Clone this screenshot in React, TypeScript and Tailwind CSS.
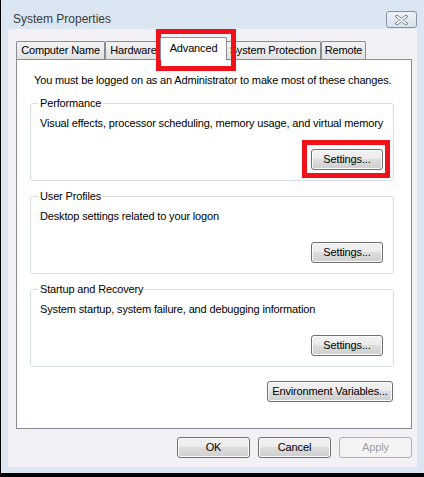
import React from 'react';

const btn =
  'h-[21px] flex items-center justify-center rounded-[3px] border border-[#707070] bg-[linear-gradient(#f2f2f2_0%,#ebebeb_50%,#dddddd_50%,#cfcfcf_100%)] shadow-[inset_0_0_0_1px_#fbfbfb] text-black';

const Tab: React.FC<{ label: string; width: string; active?: boolean }> = ({ label, width, active }) => {
  if (active) {
    return (
      <div
        className={`${width} -mx-[2px] -mb-px h-[23px] relative z-10 flex items-center justify-center pb-[2px] border border-b-0 border-[#898c95] rounded-t-[2px] bg-white`}
      >
        {label}
      </div>
    );
  }
  return (
    <div
      className={`${width} h-[18px] flex items-center justify-center border border-b-0 border-[#898c95] rounded-t-[2px] bg-[linear-gradient(#f3f3f3,#e2e2e2)]`}
    >
      {label}
    </div>
  );
};

const Group: React.FC<{ title: string; text: string }> = ({ title, text }) => (
  <fieldset className="mt-[8px] ml-[13px] mr-[17px] min-w-0 border border-[#d5dfe5] rounded-[3px] px-[9px] pb-[10px]">
    <legend className="ml-[-2px] px-[2px] leading-[14px]">{title}</legend>
    <div className="mt-[5px] leading-[16px] whitespace-nowrap">{text}</div>
    <div className="mt-[18px] flex justify-end pr-px">
      <button className={`${btn} w-[72px]`}>Settings...</button>
    </div>
  </fieldset>
);

export default function App() {
  return (
    <div className="relative w-[424px] h-[477px] bg-black pl-px pb-[4px] flex font-['Liberation_Sans',Arial,sans-serif] text-[11px] tracking-[-0.15px] text-black">
      <div className="flex-1 flex flex-col bg-[#dbe6f3] px-[7px] pb-[6px]">
        {/* title bar */}
        <div className="h-[29px] flex items-start pt-[11px]">
          <span className="pl-[5px] leading-[17px] text-[12px] tracking-normal text-[#3b3b3b]">System Properties</span>
          <div className="ml-auto w-[31px] h-[17px] rounded-[3px] border border-[#8791a0] bg-[linear-gradient(#eef2f8,#d9e1ec)] flex items-center justify-center">
            <svg width="13" height="10" viewBox="0 0 13 10">
              <path d="M2 1.5 L11 8.5 M11 1.5 L2 8.5" stroke="#6b7686" strokeWidth="3.4" strokeLinecap="round" />
              <path d="M2 1.5 L11 8.5 M11 1.5 L2 8.5" stroke="#ffffff" strokeWidth="1.6" strokeLinecap="round" />
            </svg>
          </div>
        </div>

        {/* body */}
        <div className="flex-1 flex flex-col bg-[#f3f1f6] pl-[8px] pr-[5px] pt-[12px]">
          <div className="h-[18px] flex items-end">
            <Tab label="Computer Name" width="w-[89px]" />
            <Tab label="Hardware" width="w-[57px]" />
            <Tab label="Advanced" width="w-[67px]" active />
            <Tab label="System Protection" width="w-[96px]" />
            <Tab label="Remote" width="w-[45px]" />
          </div>

          <div className="flex-1 flex flex-col border border-[#898c95] bg-white">
            <div className="pt-[12px] pl-[17px] leading-[16px] whitespace-nowrap">
              You must be logged on as an Administrator to make most of these changes.
            </div>
            <Group title="Performance" text="Visual effects, processor scheduling, memory usage, and virtual memory" />
            <Group title="User Profiles" text="Desktop settings related to your logon" />
            <Group title="Startup and Recovery" text="System startup, system failure, and debugging information" />
            <div className="mt-[14px] mr-[18px] flex justify-end">
              <button className={`${btn} w-[126px]`}>Environment Variables...</button>
            </div>
          </div>

          <div className="pt-[8px] pb-[9px] flex justify-end gap-[8px]">
            <button className={`${btn} w-[73px]`}>OK</button>
            <button className={`${btn} w-[73px]`}>Cancel</button>
            <button className="h-[21px] w-[73px] flex items-center justify-center rounded-[3px] border border-[#adb2b5] bg-[#f4f4f4] text-[#a0a0a0]">
              Apply
            </button>
          </div>
        </div>
      </div>

      {/* annotation boxes */}
      <div className="absolute left-[156px] top-[29px] w-[80px] h-[42px] border-[5px] border-[#f0121b] pointer-events-none" />
      <div className="absolute left-[302px] top-[140px] w-[88px] h-[38px] border-[5px] border-[#f0121b] pointer-events-none" />
    </div>
  );
}
